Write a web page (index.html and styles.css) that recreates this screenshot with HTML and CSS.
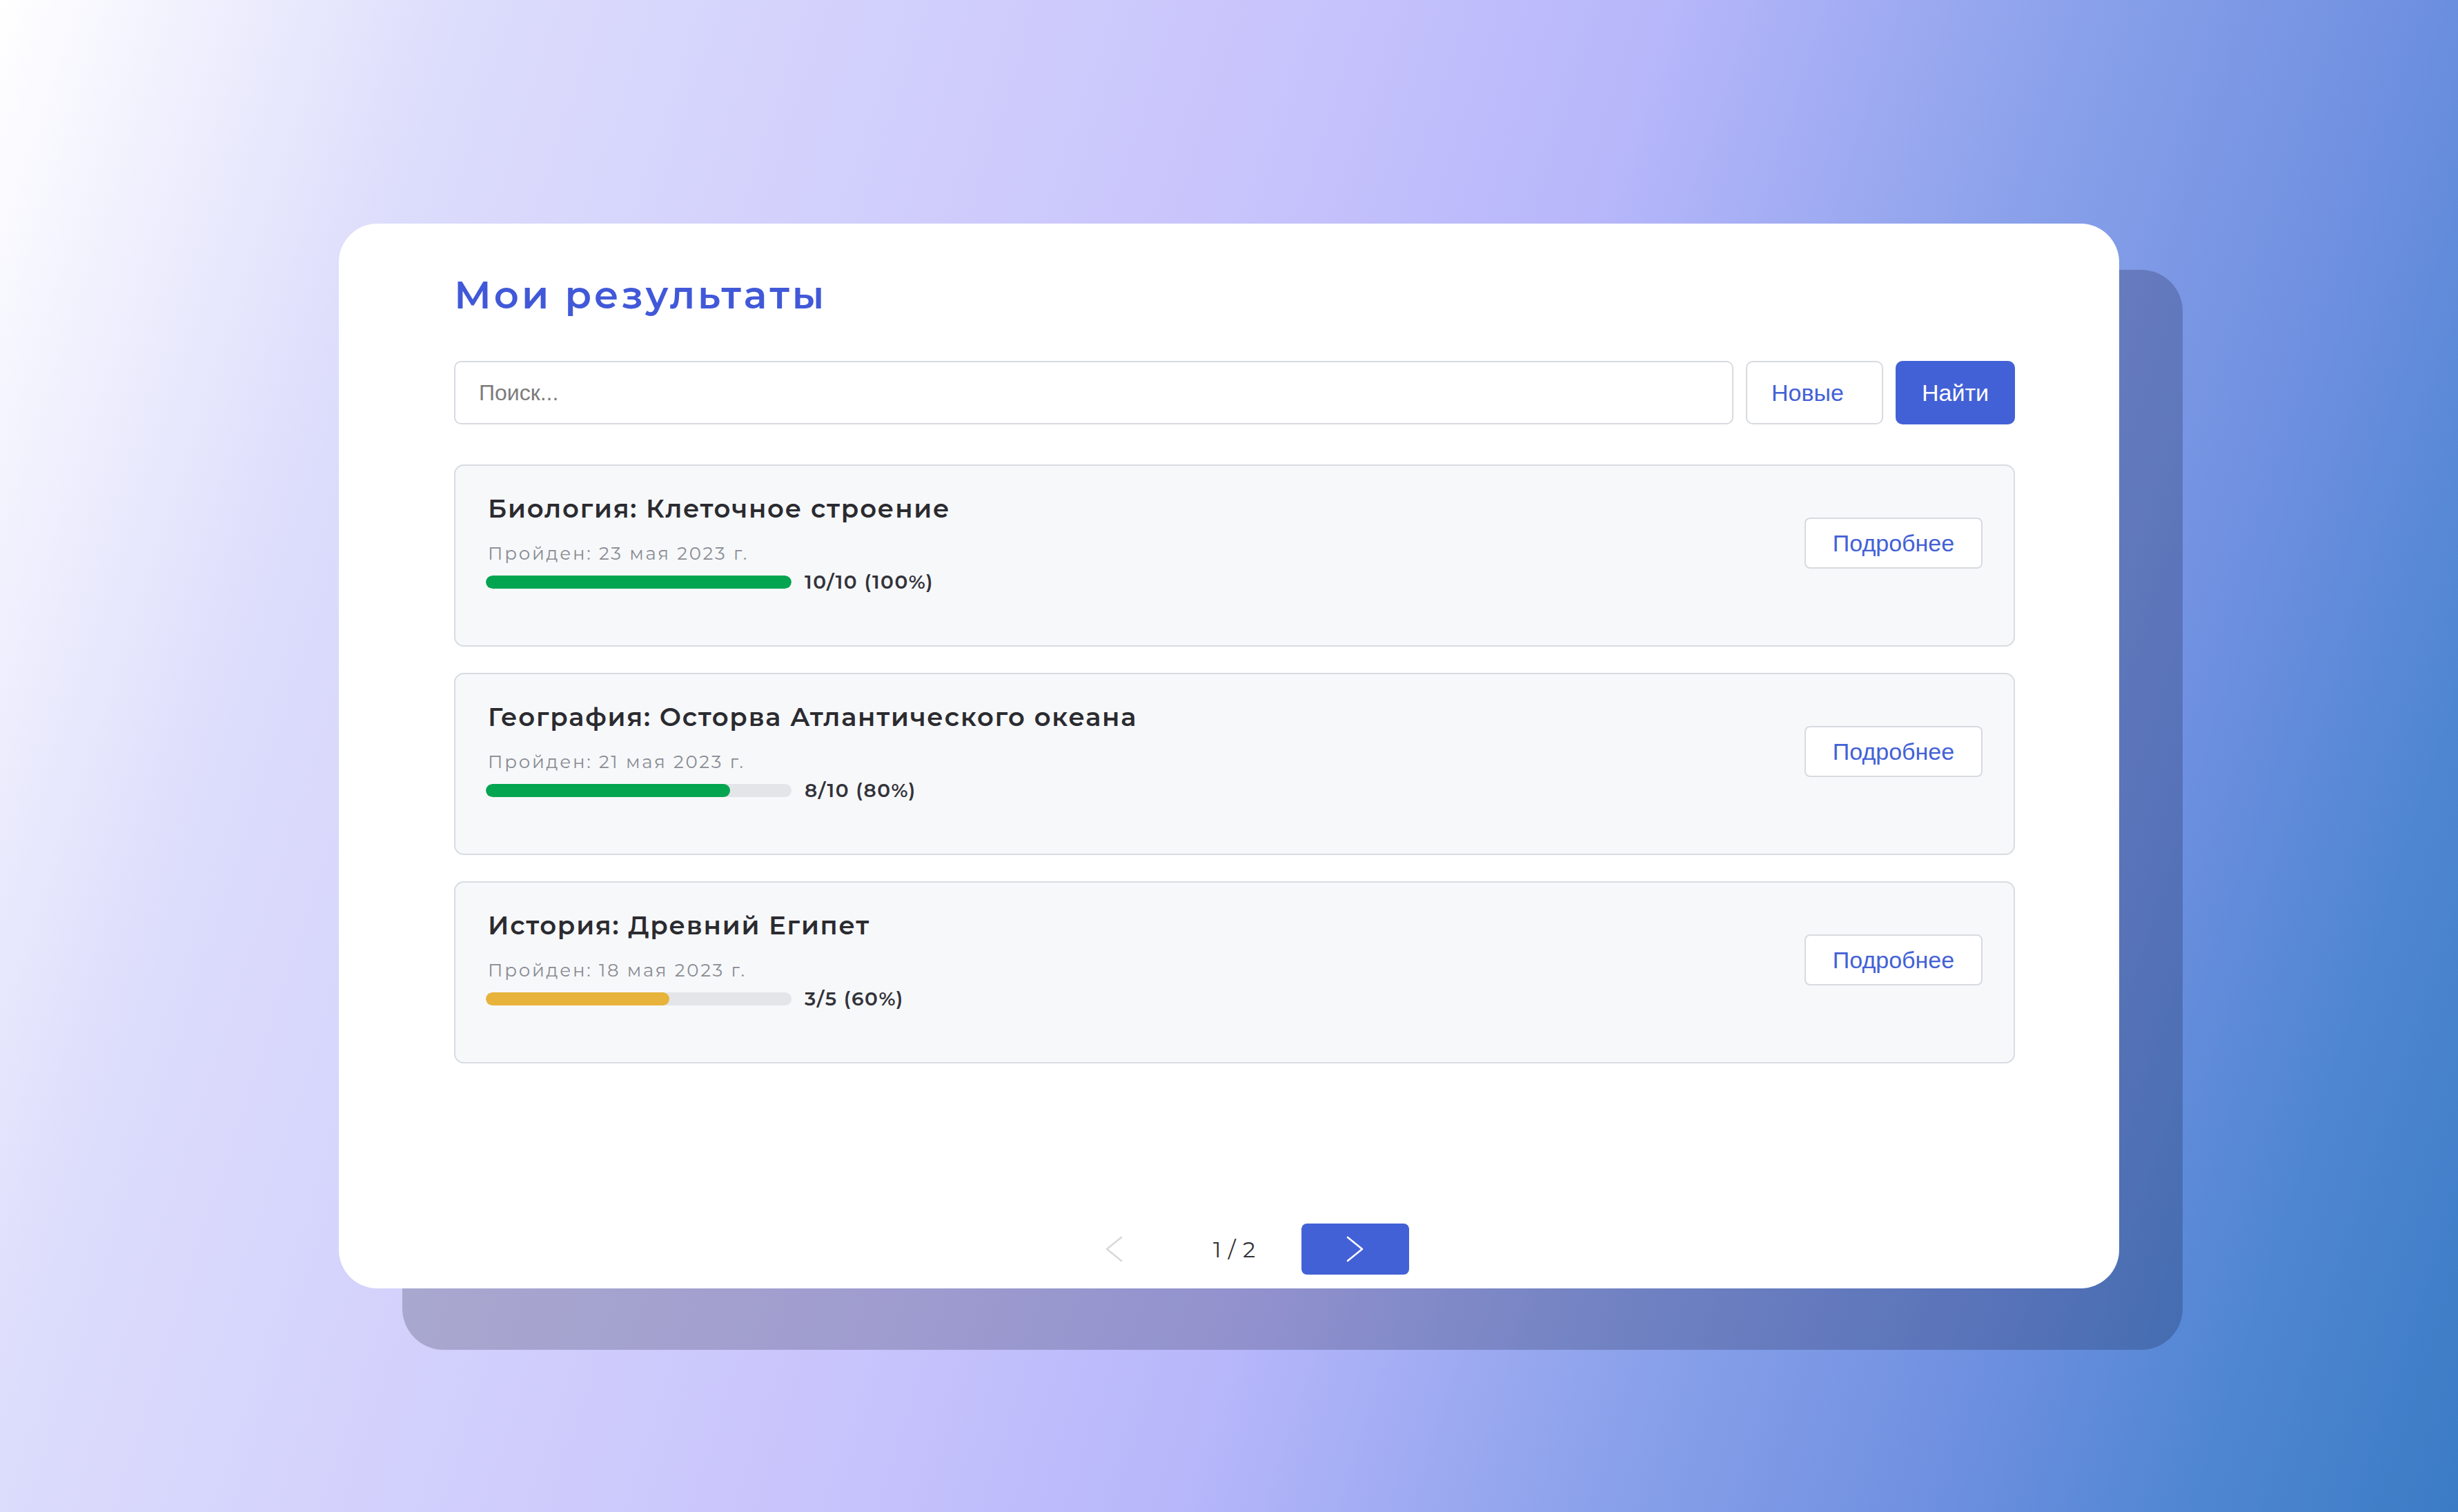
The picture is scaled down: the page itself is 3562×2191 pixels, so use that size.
FILE: index.html
```html
<!DOCTYPE html>
<html lang="ru">
<head>
<meta charset="utf-8">
<title>Мои результаты</title>
<link rel="stylesheet" href="styles.css">
</head>
<body>
<main class="stage">
  <section class="panel">
    <h1 class="panel-title">Мои результаты</h1>
    <form class="search-row">
      <input class="search-input" type="text" placeholder="Поиск...">
      <button type="button" class="btn btn-outline btn-sort">Новые</button>
      <button type="button" class="btn btn-primary btn-find">Найти</button>
    </form>
    <ul class="results">
      <li class="result">
        <div class="result-info">
          <h2 class="result-title">Биология: Клеточное строение</h2>
          <p class="result-date">Пройден: 23 мая 2023 г.</p>
          <div class="score">
            <div class="bar"><div class="bar-fill fill-good" style="width:100%"></div></div>
            <span class="score-text">10/10 (100%)</span>
          </div>
        </div>
        <button type="button" class="btn btn-outline btn-more">Подробнее</button>
      </li>
      <li class="result">
        <div class="result-info">
          <h2 class="result-title">География: Осторва Атлантического океана</h2>
          <p class="result-date">Пройден: 21 мая 2023 г.</p>
          <div class="score">
            <div class="bar"><div class="bar-fill fill-good" style="width:80%"></div></div>
            <span class="score-text">8/10 (80%)</span>
          </div>
        </div>
        <button type="button" class="btn btn-outline btn-more">Подробнее</button>
      </li>
      <li class="result">
        <div class="result-info">
          <h2 class="result-title">История: Древний Египет</h2>
          <p class="result-date">Пройден: 18 мая 2023 г.</p>
          <div class="score">
            <div class="bar"><div class="bar-fill fill-mid" style="width:60%"></div></div>
            <span class="score-text">3/5 (60%)</span>
          </div>
        </div>
        <button type="button" class="btn btn-outline btn-more">Подробнее</button>
      </li>
    </ul>
    <nav class="pager">
      <button type="button" class="pager-btn pager-prev" disabled aria-label="Назад">
        <svg width="26" height="38" viewBox="0 0 26 38"><path d="M24 2 L3 19 L24 36" fill="none" stroke="currentColor" stroke-width="2.6" stroke-linecap="round" stroke-linejoin="round"/></svg>
      </button>
      <span class="pager-text">1 / 2</span>
      <button type="button" class="pager-btn pager-next" aria-label="Вперёд">
        <svg width="26" height="38" viewBox="0 0 26 38"><path d="M2 2 L23 19 L2 36" fill="none" stroke="currentColor" stroke-width="2.6" stroke-linecap="round" stroke-linejoin="round"/></svg>
      </button>
    </nav>
  </section>
</main>
</body>
</html>
```
FILE: styles.css
```css
* { box-sizing: border-box; }

html, body {
  margin: 0;
  padding: 0;
}

body {
  min-height: 2191px;
  font-family: "Montserrat", Inter, "DejaVu Sans", sans-serif;
  background: linear-gradient(108deg, #ffffff 0%, #dcdcfc 16%, #c8c4fc 44%, #b6b6fa 57%, #8ca2eb 70%, #6f90e0 82%, #4f86d2 91%, #3b7bc5 100%);
}

.stage {
  min-height: 2191px;
  display: flex;
  align-items: center;
  justify-content: center;
}

.panel {
  position: relative;
  width: 2580px;
  height: 1543px;
  background: #ffffff;
  border-radius: 56px;
  padding: 70px 151px 20px 167px;
  display: flex;
  flex-direction: column;
}

.panel::before {
  content: "";
  position: absolute;
  left: 92px;
  right: -92px;
  top: 67px;
  bottom: -89px;
  border-radius: 60px;
  background: rgba(0, 0, 30, 0.2);
  z-index: -1;
}

.panel-title {
  margin: 0;
  font-size: 56px;
  line-height: 1.2;
  font-weight: 600;
  color: #4159d8;
  letter-spacing: 3.9px;
}

.search-row {
  margin: 62px 0 0;
  display: flex;
  gap: 18px;
  height: 92px;
}

.search-input {
  flex: 1;
  height: 92px;
  border: 2px solid #d7dadf;
  border-radius: 10px;
  padding: 0 34px;
  font-family: "Liberation Sans", Arial, sans-serif;
  font-size: 32px;
  color: #333;
  background: #fff;
  outline: none;
}

.search-input::placeholder {
  color: #7c7c7c;
}

.btn {
  font-family: "Liberation Sans", Arial, sans-serif;
  cursor: pointer;
  border-radius: 10px;
  margin: 0;
}

.btn-outline {
  background: #ffffff;
  border: 2px solid #d7dadf;
  color: #4361d6;
}

.btn-primary {
  background: #4361d6;
  border: 2px solid #4361d6;
  color: #ffffff;
}

.btn-sort {
  width: 199px;
  height: 92px;
  font-size: 34px;
  text-align: left;
  padding: 0 0 0 35px;
}

.btn-find {
  width: 173px;
  height: 92px;
  font-size: 34px;
  padding: 0;
}

.results {
  list-style: none;
  margin: 58px 0 0;
  padding: 0;
  display: flex;
  flex-direction: column;
  gap: 38px;
}

.result {
  display: flex;
  align-items: center;
  justify-content: space-between;
  background: #f7f8fa;
  border: 2px solid #d8dce1;
  border-radius: 14px;
  padding: 40px 45px 76px 47px;
}

.result-info {
  display: flex;
  flex-direction: column;
}

.result-title {
  margin: 0;
  font-size: 37px;
  line-height: 44px;
  font-weight: 600;
  color: #2b2b30;
  letter-spacing: 1.75px;
}

.result-date {
  margin: 28px 0 0;
  font-size: 26px;
  line-height: 30px;
  color: #898c93;
  letter-spacing: 2.7px;
}

.score {
  margin-top: 11px;
  display: flex;
  align-items: center;
  gap: 19px;
  height: 31px;
}

.bar {
  width: 443px;
  height: 19px;
  border-radius: 10px;
  background: #e4e5e9;
  overflow: hidden;
  margin-left: -3px;
}

.bar-fill {
  height: 100%;
  border-radius: 10px;
}

.fill-good { background: #03a550; }
.fill-mid { background: #e8b33a; }

.score-text {
  font-size: 28px;
  line-height: 31px;
  font-weight: 600;
  color: #33333a;
  letter-spacing: 1.5px;
}

.btn-more {
  width: 258px;
  height: 74px;
  border-radius: 8px;
  font-size: 34px;
  padding: 0;
  flex: none;
}

.pager {
  margin-top: auto;
  display: flex;
  justify-content: center;
  align-items: center;
  gap: 66px;
}

.pager-btn {
  width: 156px;
  height: 74px;
  border-radius: 8px;
  border: none;
  display: flex;
  align-items: center;
  justify-content: center;
  padding: 0;
  cursor: pointer;
}

.pager-prev {
  background: transparent;
  color: #d9d9dc;
}

.pager-next {
  background: #4361d6;
  color: #ffffff;
}

.pager-text {
  font-size: 32px;
  color: #333338;
  letter-spacing: 1px;
}
```
